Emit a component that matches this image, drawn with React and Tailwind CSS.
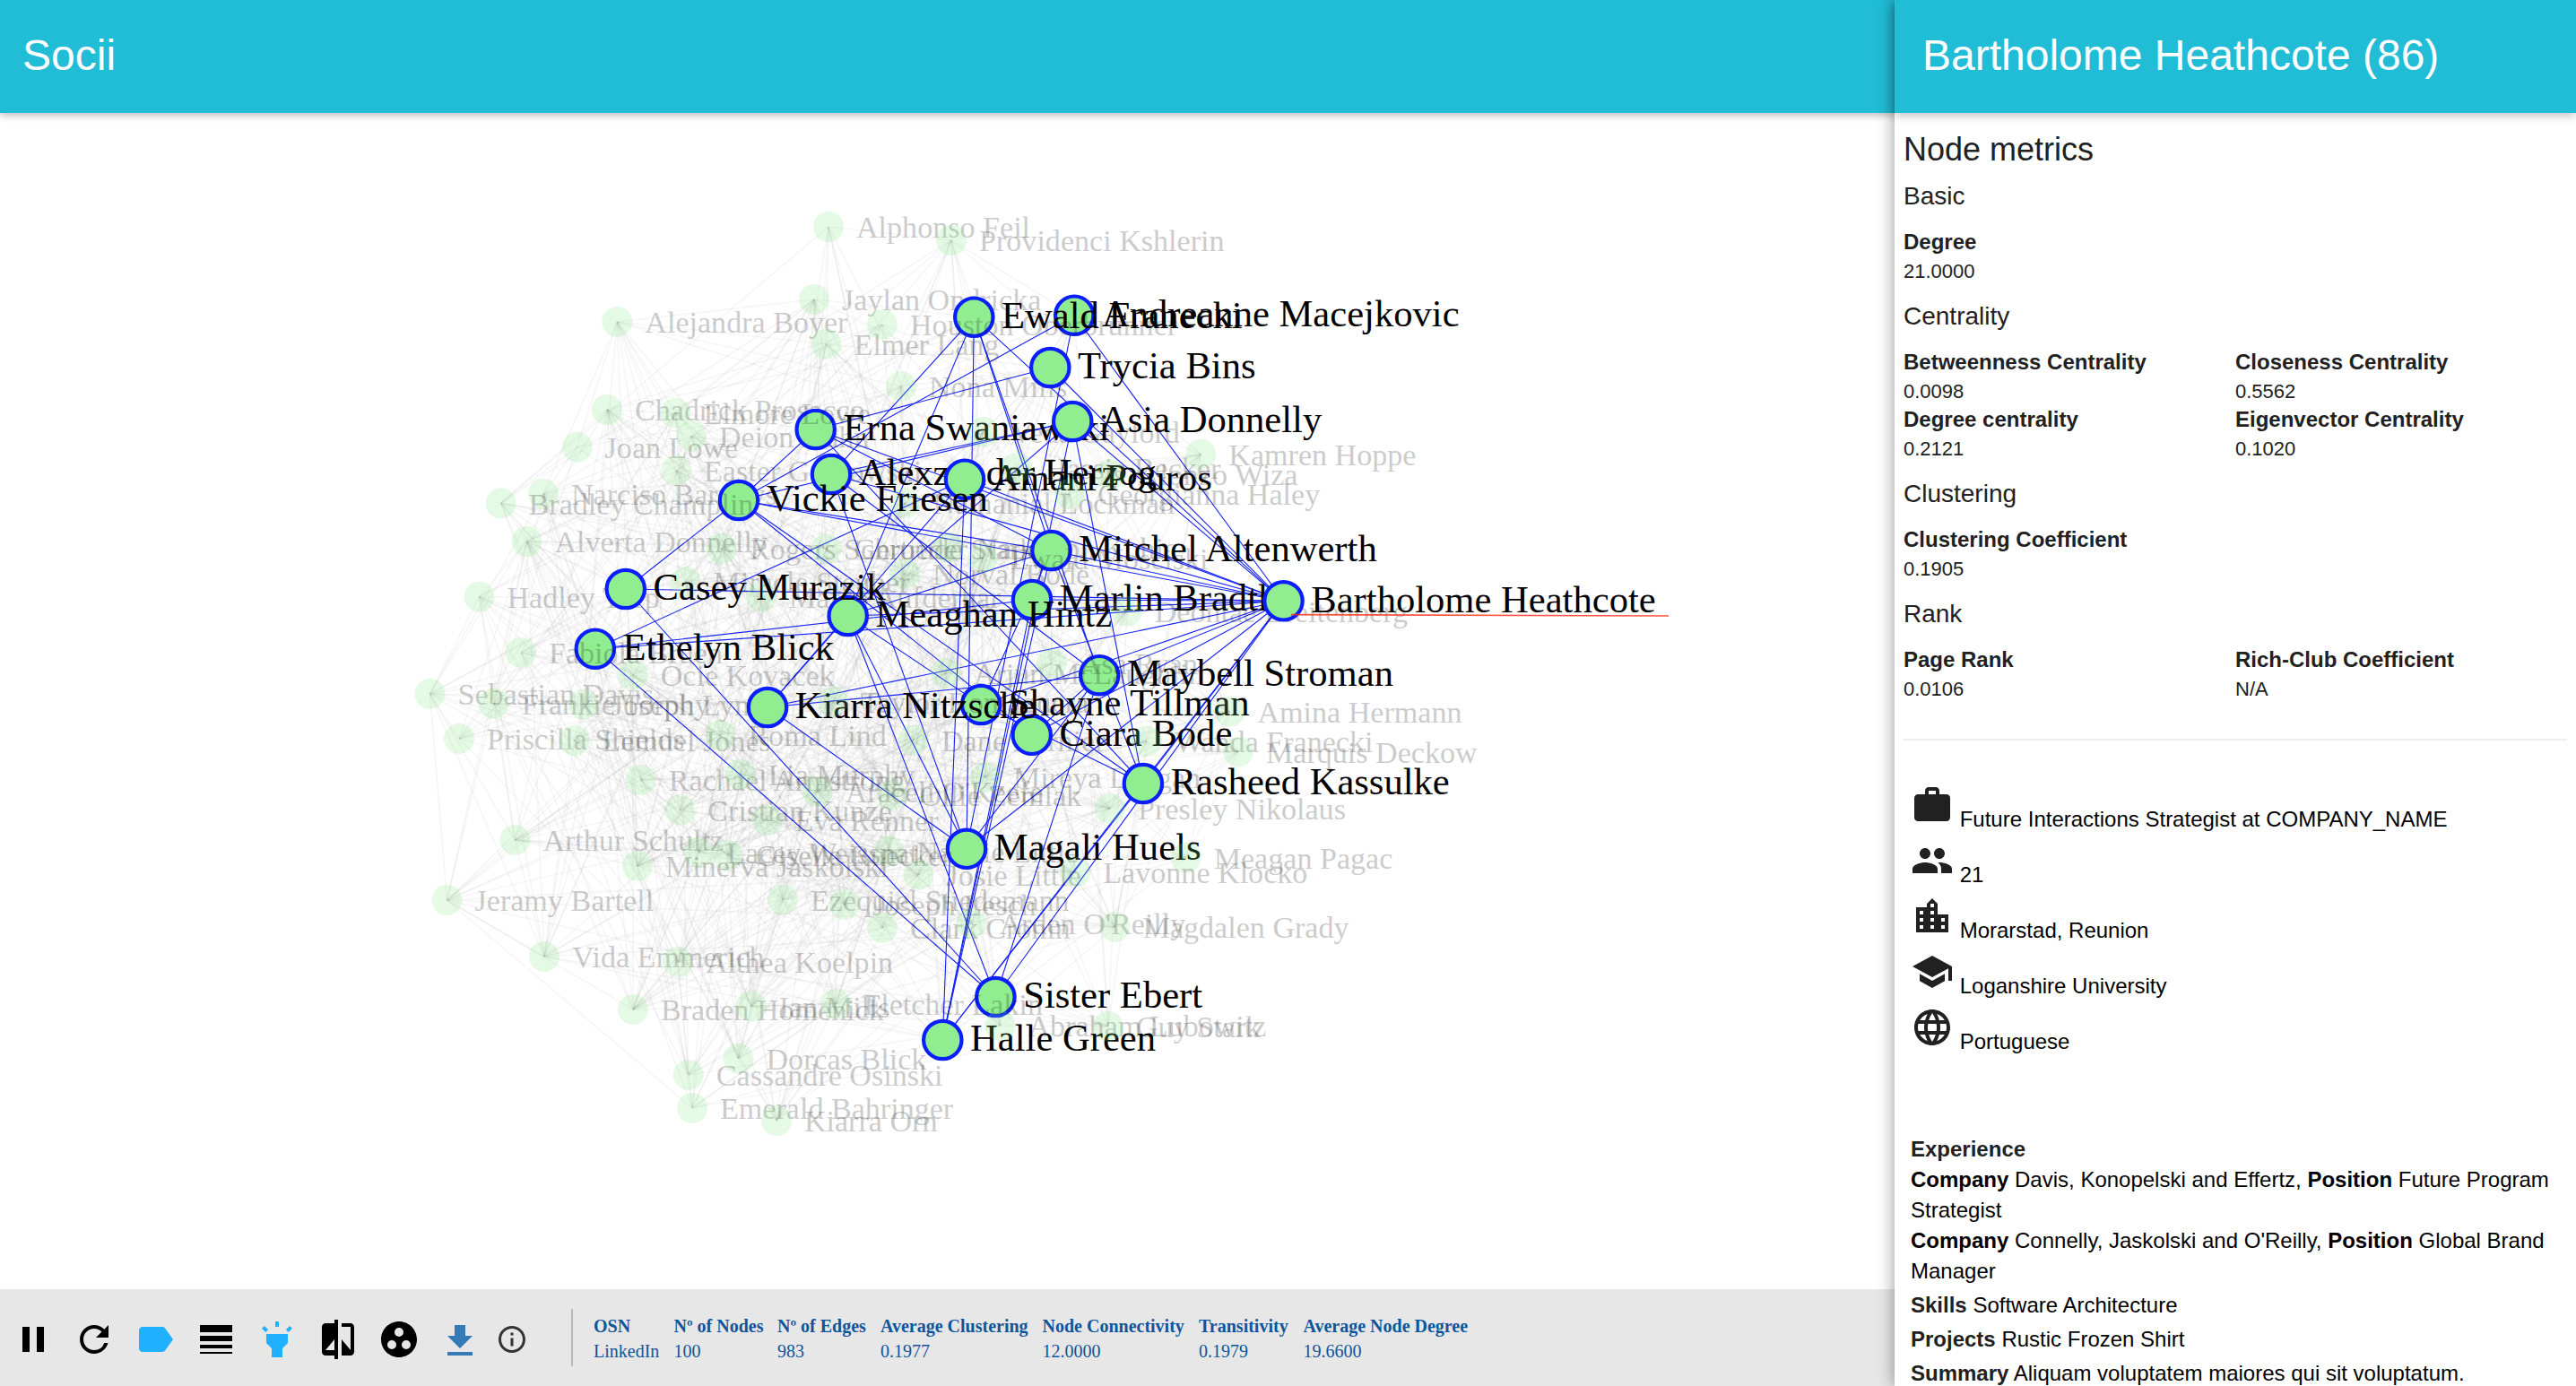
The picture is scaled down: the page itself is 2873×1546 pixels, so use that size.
import React from "react";
import {
  MdPause,
  MdRefresh,
  MdLabel,
  MdLineWeight,
  MdHighlight,
  MdCompare,
  MdGroupWork,
  MdInfoOutline,
  MdWork,
  MdPeople,
  MdLocationCity,
  MdSchool,
  MdLanguage,
} from "react-icons/md";

// [name, x, y, highlighted] in paint order
const NODES = [
  ["Alphonso Feil", 924, 253],
  ["Providenci Kshlerin", 1061, 268],
  ["Jaylan Ondricka", 908, 334],
  ["Alejandra Boyer", 688.3, 359],
  ["Elmer Lang", 921.6, 383.7],
  ["Nona Mills", 1005, 431],
  ["Chadrick Prosacco", 677, 457],
  ["Deion Kuhn", 771, 486.7],
  ["Joan Lowe", 643.6, 498.7],
  ["Easter Gutkowski", 754, 525],
  ["Narciso Barrows", 606, 551],
  ["Alverta Donnelly", 587.5, 604],
  ["Rogers Schroeder", 805, 612],
  ["Gertrude Stark", 921.6, 612],
  ["Napoleon Kuhic", 1057.7, 610.7],
  ["Norval Bode", 1009, 640],
  ["Hadley Torp", 534.5, 665.7],
  ["Miracle Steuber", 764.6, 649],
  ["Marco Aufderhar", 849, 665.7],
  ["Nathanial Lockman", 1009.4, 561],
  ["Sebastian Davis", 479.5, 774],
  ["Frankie Torphy", 550.7, 785],
  ["Joseph Lynch", 650.8, 785.7],
  ["Priscilla Shields", 512, 824],
  ["Lemuel Jones", 640.5, 826],
  ["Ocie Kovacek", 705.7, 753],
  ["Dane Bernier", 1018.9, 825.5],
  ["Mireya Langan", 1099, 867],
  ["Natalie Little", 991.3, 949.5],
  ["Kamren Hoppe", 1339.3, 506.7],
  ["Presley Nikolaus", 1238, 902],
  ["Erna Swaniawski", 909.7, 479, 1],
  ["Veda Gaylord", 1096.5, 481.7],
  ["Asia Donnelly", 1196.2, 470, 1],
  ["Alexzander Herzog", 927, 529, 1],
  ["Amani Pouros", 1076, 534.7, 1],
  ["Vickie Friesen", 824, 558, 1],
  ["Trycia Bins", 1171.3, 410, 1],
  ["Mitchel Altenwerth", 1172.5, 614, 1],
  ["Marlin Bradtke", 1151, 669, 1],
  ["Deontae Breitenberg", 1256.7, 681.7],
  ["Meaghan Hintz", 945.7, 687, 1],
  ["Casey Murazik", 697.8, 657, 1],
  ["Ethelyn Blick", 663.8, 723.7, 1],
  ["Bartholome Heathcote", 1431.5, 670.3, 1],
  ["Ciara Bode", 1150.7, 819.8, 1],
  ["Shayne Tillman", 1094.2, 786, 1],
  ["Kiarra Nitzsche", 856, 789, 1],
  ["Maybell Stroman", 1226.2, 753.2, 1],
  ["Rasheed Kassulke", 1274.9, 874, 1],
  ["Magali Huels", 1078, 946.8, 1],
  ["Sister Ebert", 1110.4, 1112, 1],
  ["Halle Green", 1051.3, 1160, 1],
  ["Andreanne Macejkovic", 1198.2, 351.7, 1],
  ["Ewald Franecki", 1086.3, 353.7, 1],
  ["Houston Oberbrunner", 984, 362],
  ["Elmore Lowe", 753.6, 460.7],
  ["Bradley Champlin", 558.6, 561.3],
  ["Hassie Becker", 1134.5, 521.7],
  ["Alonzo Wiza", 1237.7, 529],
  ["Georgianna Haley", 1193, 551],
  ["Ewald Mosciski", 1096, 622.7],
  ["Fabiola Bruen", 581, 728],
  ["Taylor Romaguera", 929, 782.7],
  ["Arjun McLaughlin", 1054.9, 751],
  ["Asa Ryan", 1172.9, 740],
  ["Amina Hermann", 1371.4, 793.8],
  ["Wanda Franecki", 1279, 826.7],
  ["Marquis Deckow", 1381, 838.5],
  ["Roma Lind", 803.4, 820],
  ["Rachael Armstrong", 714.8, 870],
  ["Lia Murphy", 825.5, 863.8],
  ["Araceli O'Keefe", 911.7, 883],
  ["Ollie Zemlak", 994.4, 886.8],
  ["Cristian Kunze", 758.3, 903.6],
  ["Eva Renner", 855.6, 914.7],
  ["Arthur Schultz", 574.4, 937],
  ["Lacey Weissnat", 779.3, 950.7],
  ["Giselle Ruecker", 811.7, 954],
  ["Minerva Jaskolski", 710.9, 966],
  ["Josie Little", 1024.4, 976],
  ["Meagan Pagac", 1322.7, 956.8],
  ["Lavonne Klocko", 1199.3, 972.9],
  ["Jeramy Bartell", 498.5, 1004],
  ["Ezequiel Stiedemann", 873, 1003.5],
  ["Joseph Lesch", 942, 1009],
  ["Clark Cronin", 984, 1035],
  ["Arden O'Reilly", 1083.5, 1030],
  ["Magdalen Grady", 1243.6, 1034],
  ["Vida Emmerich", 606.9, 1067],
  ["Althea Koelpin", 756, 1072.7],
  ["Braden Homenick", 706, 1126],
  ["Ian Mills", 837.8, 1122.5],
  ["Fletcher Lakin", 932.3, 1120],
  ["Abraham Lubowitz", 1115.5, 1144],
  ["Guy Stark", 1236, 1144.7],
  ["Dorcas Blick", 823.5, 1180.7],
  ["Cassandre Osinski", 767.8, 1199],
  ["Emerald Bahringer", 772, 1236],
  ["Kiarra Orn", 865.9, 1250],
];

const NEIGHBOURS = {
  Bartholome:
    "Ewald Andreanne Trycia Asia Erna Alexzander Amani Vickie Mitchel Marlin Casey Meaghan Ethelyn Maybell Shayne Kiarra Ciara Rasheed Magali Sister Halle",
  Ewald: "Alexzander Meaghan Magali Maybell Mitchel",
  Andreanne: "Vickie Magali",
  Trycia: "Erna",
  Asia: "Alexzander Vickie Meaghan Halle Rasheed",
  Erna: "Vickie Rasheed Mitchel",
  Alexzander: "Magali Maybell",
  Amani: "Ethelyn Kiarra Halle",
  Vickie: "Casey Mitchel Rasheed Ciara",
  Meaghan: "Magali Sister Shayne Kiarra Mitchel",
  Casey: "Sister",
  Ethelyn: "Sister Marlin",
  Kiarra: "Maybell Magali",
  Mitchel: "Shayne Halle Rasheed",
  Marlin: "Halle",
  Shayne: "Rasheed",
  Maybell: "Ciara Magali Sister",
  Rasheed: "Halle",
};

const active = {};
NODES.forEach((n) => {
  if (n[3]) active[n[0].split(" ")[0]] = n;
});

const activeEdges = Object.entries(NEIGHBOURS).flatMap(([from, list]) =>
  list.split(" ").map((to) => [active[from], active[to]])
);

// Seeded generator, so the faded links are the same on each load
function fadedEdges(count) {
  let seed = 20177;
  const next = () => {
    seed = (seed * 1103515245 + 12345) % 2147483648;
    return seed / 2147483648;
  };
  const seen = new Set();
  const out = [];
  let guard = 0;
  while (out.length < count && guard++ < 60000) {
    const i = guard % NODES.length;
    const j = Math.floor(next() * NODES.length);
    const a = NODES[i];
    const b = NODES[j];
    const key = Math.min(i, j) + "-" + Math.max(i, j);
    const roll = next();
    if (i === j || seen.has(key) || (a[3] && b[3])) continue;
    if (a[0].startsWith("Bartholome") || b[0].startsWith("Bartholome")) continue;
    const d = Math.hypot(a[1] - b[1], a[2] - b[2]);
    if (roll > Math.exp(-d / 330)) continue;
    seen.add(key);
    out.push([a, b]);
  }
  return out;
}

const faded = fadedEdges(920);

function Graph() {
  return (
    <svg className="block h-[1312px] w-[2113px]" viewBox="0 126 2113 1312">
      <g stroke="#999" strokeOpacity="0.09" strokeWidth="1.6">
        {faded.map(([a, b], i) => (
          <line key={i} x1={a[1]} y1={a[2]} x2={b[1]} y2={b[2]} />
        ))}
      </g>
      <g stroke="#1420f5" strokeWidth="1.1">
        {activeEdges.map(([a, b], i) => (
          <line key={i} x1={a[1]} y1={a[2]} x2={b[1]} y2={b[2]} />
        ))}
      </g>
      {NODES.map(([name, x, y, on]) =>
        on ? (
          <g key={name}>
            <circle cx={x} cy={y} r="21.2" fill="#90ee90" stroke="#0a1eff" strokeWidth="4.2" />
            <text x={x + 30.8} y={y + 12.2} className="font-['Liberation_Serif',serif] text-[42.6px]">
              {name}
            </text>
          </g>
        ) : (
          <g key={name} opacity="0.2">
            <circle cx={x} cy={y} r="17" fill="#80e880" />
            <text x={x + 31} y={y + 12.4} className="font-['Liberation_Serif',serif] text-[34.1px]">
              {name}
            </text>
          </g>
        )
      )}
      <path d="M1440 685.6L1861 687" stroke="#ff2a12" strokeOpacity="0.8" strokeWidth="1.6" />
    </svg>
  );
}

function Metric({ label, value }) {
  return (
    <div className="h-16 w-[370px]">
      <div className="text-2xl leading-[32px] font-bold">{label}</div>
      <div className="pt-[2px] text-[22px] leading-[29px]">{value}</div>
    </div>
  );
}

function Section({ title, metrics }) {
  return (
    <section>
      <h3 className="text-[28px] leading-[70px]">{title}</h3>
      <div className="flex flex-wrap">
        {metrics.map(([label, value]) => (
          <Metric key={label} label={label} value={value} />
        ))}
      </div>
    </section>
  );
}

function Fact({ icon: Icon, children }) {
  return (
    <li className="flex h-[62px] items-start gap-[6.7px]">
      <Icon className="size-12 shrink-0 text-[#212121]" />
      <span className="mt-[23px] text-2xl leading-[34px] text-black">{children}</span>
    </li>
  );
}

const STATS = [
  ["OSN", "LinkedIn"],
  ["Nº of Nodes", "100"],
  ["Nº of Edges", "983"],
  ["Average Clustering", "0.1977"],
  ["Node Connectivity", "12.0000"],
  ["Transitivity", "0.1979"],
  ["Average Node Degree", "19.6600"],
];

function Toolbar() {
  return (
    <footer className="flex h-[108px] items-center bg-[#e7e7e7] pl-[13px] text-black">
      <div className="mt-[8px] flex items-center gap-5 pb-1">
        <MdPause className="size-12" />
        <MdRefresh className="size-12" />
        <MdLabel className="size-12 text-[#1fb0ff]" />
        <MdLineWeight className="size-12" />
        <MdHighlight className="size-12 text-[#1fb0ff]" />
        <MdCompare className="size-12" />
        <MdGroupWork className="size-12" />
        <svg viewBox="0 0 24 24" className="mt-1 size-12 fill-[#337ab7]">
          <path d="M19 9h-4V3H9v6H5l7 7 7-7zM5 18v2h14v-2H5z" />
        </svg>
        <MdInfoOutline className="-ml-[4px] size-9 text-[#333]" />
      </div>
      <div className="ml-[48px] h-16 w-[2px] bg-[#b9b9b9]" />
      <div className="mt-[2px] ml-[23px] grid grid-cols-[89.5px_115.5px_115px_180.5px_174.5px_116.5px_190px] font-['Liberation_Serif',serif] text-[20px] leading-[28px] whitespace-nowrap text-[#0f559b]">
        {STATS.map(([label, value]) => (
          <div key={label}>
            <div className="font-bold">{label}</div>
            <div>{value}</div>
          </div>
        ))}
      </div>
    </footer>
  );
}

export default function App() {
  return (
    <div className="flex h-[1546px] w-[2873px] overflow-hidden bg-white font-['Liberation_Sans',Arial,sans-serif]">
      <main className="flex w-[2113px] flex-col">
        <header className="relative h-[126px] bg-[#21bcd6] pl-[25px] text-5xl leading-[123px] text-white shadow-[0_3px_8px_rgba(0,0,0,0.25)]">
          Socii
        </header>
        <Graph />
        <Toolbar />
      </main>

      <aside className="relative w-[760px] bg-white text-[#212121] shadow-[0_0_18px_rgba(0,0,0,0.42)]">
        <header className="h-[126px] bg-[#21bcd6] pl-[31px] text-5xl leading-[123px] text-white shadow-[0_3px_10px_rgba(0,0,0,0.25)]">
          Bartholome Heathcote (86)
        </header>
        <div className="px-[10px] pt-px">
          <h2 className="h-[57px] pt-[22px] text-4xl leading-[35px]">Node metrics</h2>
          <Section title="Basic" metrics={[["Degree", "21.0000"]]} />
          <Section
            title="Centrality"
            metrics={[
              ["Betweenness Centrality", "0.0098"],
              ["Closeness Centrality", "0.5562"],
              ["Degree centrality", "0.2121"],
              ["Eigenvector Centrality", "0.1020"],
            ]}
          />
          <Section title="Clustering" metrics={[["Clustering Coefficient", "0.1905"]]} />
          <Section
            title="Rank"
            metrics={[
              ["Page Rank", "0.0106"],
              ["Rich-Club Coefficient", "N/A"],
            ]}
          />
          <div className="mt-10 h-[2px] bg-[#eee]" />

          <ul className="mt-12 pl-2">
            <Fact icon={MdWork}>Future Interactions Strategist at COMPANY_NAME</Fact>
            <Fact icon={MdPeople}>21</Fact>
            <Fact icon={MdLocationCity}>Morarstad, Reunion</Fact>
            <Fact icon={MdSchool}>Loganshire University</Fact>
            <Fact icon={MdLanguage}>Portuguese</Fact>
          </ul>

          <div className="mt-[81px] pl-2 text-2xl leading-[34px] text-black">
            <p className="font-bold text-[#212121]">Experience</p>
            <p>
              <b>Company</b> Davis, Konopelski and Effertz, <b>Position</b> Future Program Strategist
            </p>
            <p>
              <b>Company</b> Connelly, Jaskolski and O'Reilly, <b>Position</b> Global Brand Manager
            </p>
            <p className="mt-1">
              <b className="text-[#212121]">Skills</b> Software Architecture
            </p>
            <p className="mt-1">
              <b className="text-[#212121]">Projects</b> Rustic Frozen Shirt
            </p>
            <p className="mt-1">
              <b className="text-[#212121]">Summary</b> Aliquam voluptatem maiores qui sit voluptatum.
            </p>
          </div>
        </div>
      </aside>
    </div>
  );
}
